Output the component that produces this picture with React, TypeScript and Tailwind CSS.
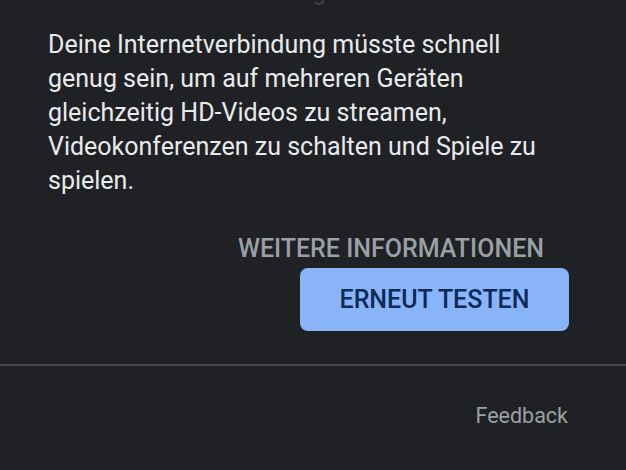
import React from "react";

export default function App() {
  return (
    <div
      className="w-[626px] h-[470px] overflow-hidden bg-[#202124] flex flex-col"
      style={{ fontFamily: "Roboto, 'Noto Sans', Arial, sans-serif" }}
    >
      <div className="relative h-[28px] overflow-hidden">
        <div className="absolute left-[48px] top-[-21px] text-[25px] leading-[26px] text-[#3f4247] whitespace-nowrap">
          Deine Internetverbindung ist sehr schnell
        </div>
      </div>
      <p className="pl-[48px] text-[25px] leading-[34px] text-[#e8eaed] w-[552px]">
        Deine Internetverbindung müsste schnell genug sein, um auf mehreren Geräten gleichzeitig HD-Videos zu streamen, Videokonferenzen zu schalten und Spiele zu spielen.
      </p>
      <div className="flex flex-col items-end pr-[57px] mt-[36px]">
        <div className="mr-[25px] text-[25px] leading-[30px] font-medium text-[#9aa0a6]">
          WEITERE INFORMATIONEN
        </div>
        <button className="mt-[4px] w-[269px] h-[63px] rounded-[8px] bg-[#8ab4f8] text-[#0d2a58] text-[25px] font-medium flex items-center justify-center">
          ERNEUT TESTEN
        </button>
      </div>
      <div className="mt-[33px] h-[2px] bg-[#44464a]" />
      <div className="flex justify-end pr-[58px] mt-[36px]">
        <span className="text-[21.5px] leading-[28px] text-[#9aa0a6]">Feedback</span>
      </div>
    </div>
  );
}
